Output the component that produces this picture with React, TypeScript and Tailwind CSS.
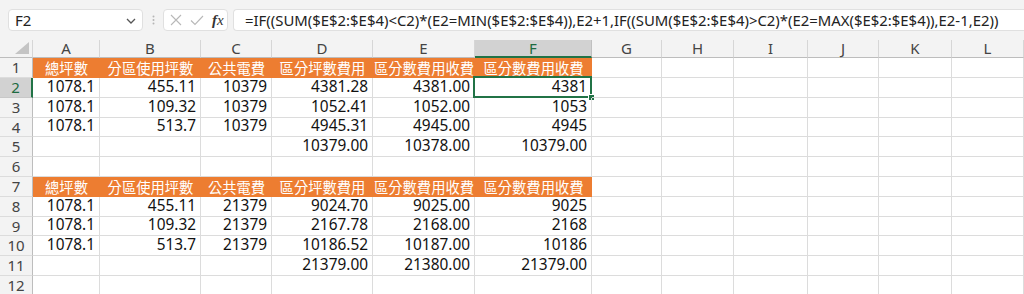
import React from "react";

const letters = ["A", "B", "C", "D", "E", "F", "G", "H", "I", "J", "K", "L"];
const rowH = [20, 20, 20, 19, 20, 20, 20, 20, 19, 20, 20, 20];

const HEAD = ["總坪數", "分區使用坪數", "公共電費", "區分坪數費用", "區分數費用收費", "區分數費用收費"];

const data: (string[] | "head" | null)[] = [
  "head",
  ["1078.1", "455.11", "10379", "4381.28", "4381.00", "4381"],
  ["1078.1", "109.32", "10379", "1052.41", "1052.00", "1053"],
  ["1078.1", "513.7", "10379", "4945.31", "4945.00", "4945"],
  ["", "", "", "10379.00", "10378.00", "10379.00"],
  null,
  "head",
  ["1078.1", "455.11", "21379", "9024.70", "9025.00", "9025"],
  ["1078.1", "109.32", "21379", "2167.78", "2168.00", "2168"],
  ["1078.1", "513.7", "21379", "10186.52", "10187.00", "10186"],
  ["", "", "", "21379.00", "21380.00", "21379.00"],
  null,
];

const uiFont = { fontFamily: '"Noto Sans", "Liberation Sans", sans-serif' };
const cellFont = { fontFamily: '"Noto Sans", "Liberation Sans", sans-serif' };
const cjkFont = { fontFamily: '"Noto Sans CJK TC", "Noto Sans", sans-serif' };

function FormulaBar() {
  return (
    <div className="h-[40px] bg-[#f3f3f3] flex items-start pt-[9px] pl-[8px] gap-0" style={uiFont}>
      <div className="w-[135px] h-[22px] bg-white border border-[#e0e0e0] rounded-[4px] flex items-center justify-between pl-[6px] pr-[6px]">
        <span className="text-[15px] text-[#222] leading-none">F2</span>
        <svg width="10" height="6" viewBox="0 0 10 6" className="mt-[2px]">
          <path d="M1 1 L5 5 L9 1" fill="none" stroke="#555" strokeWidth="1.3" />
        </svg>
      </div>
      <div className="w-[20px] h-[22px] flex items-center justify-center">
        <svg width="3" height="10" viewBox="0 0 3 10">
          <circle cx="1.5" cy="1.5" r="1" fill="#b5b5b5" />
          <circle cx="1.5" cy="5" r="1" fill="#b5b5b5" />
          <circle cx="1.5" cy="8.5" r="1" fill="#b5b5b5" />
        </svg>
      </div>
      <div className="w-[65px] h-[22px] bg-white border border-[#e0e0e0] rounded-[4px] flex items-center pl-[6px] gap-[8px]">
        <svg width="12" height="12" viewBox="0 0 12 12">
          <path d="M1 1 L11 11 M11 1 L1 11" stroke="#b8b8b8" strokeWidth="1.1" />
        </svg>
        <svg width="14" height="11" viewBox="0 0 14 11">
          <path d="M1 5.5 L5 9.5 L13 1" fill="none" stroke="#b8b8b8" strokeWidth="1.1" />
        </svg>
        <span className="text-[15px] text-[#333] italic leading-none" style={{ fontFamily: '"Liberation Serif", serif' }}>
          <span className="font-bold">f</span>x
        </span>
      </div>
      <div className="ml-[5px] flex-1 h-[22px] bg-white border border-r-0 border-[#e0e0e0] rounded-l-[4px] flex items-center pl-[11px] overflow-hidden whitespace-nowrap">
        <span className="text-[14.9px] text-[#222] leading-none">
          =IF((SUM($E$2:$E$4)&lt;C2)*(E2=MIN($E$2:$E$4)),E2+1,IF((SUM($E$2:$E$4)&gt;C2)*(E2=MAX($E$2:$E$4)),E2-1,E2))
        </span>
      </div>
    </div>
  );
}

export default function App() {
  return (
    <div className="w-[1024px] h-[294px] overflow-hidden bg-white">
      <FormulaBar />
      <div className="grid grid-cols-[33px_67px_101px_71px_101px_102px_117px_70px_72px_74px_71px_73px_72px_1fr]" style={uiFont}>
        {/* header row */}
        <div className="h-[18px] bg-[#f3f3f3] border-b border-[#bdbdbd] relative border-r border-r-[#d6d6d6]">
          <svg width="14" height="12" viewBox="0 0 14 12" className="absolute right-[3px] bottom-[3px]">
            <path d="M14 0 L14 12 L0 12 Z" fill="#c4c4c4" />
          </svg>
        </div>
        {letters.map((l, i) =>
          i === 5 ? (
            <div key={l} className="h-[18px] bg-[#d2d2d2] border-b-2 border-b-[#217346] border-r border-r-[#c0c0c0] flex items-center justify-center text-[15px] text-[#1e6b41] leading-none">
              {l}
            </div>
          ) : (
            <div key={l} className="h-[18px] bg-[#f3f3f3] border-b border-[#bdbdbd] border-r border-r-[#d6d6d6] flex items-center justify-center text-[15px] text-[#444] leading-none">
              {l}
            </div>
          )
        )}
        <div className="h-[18px] bg-[#f3f3f3] border-b border-[#bdbdbd]" />

        {data.map((row, r) => {
          const h = rowH[r];
          const sel = r === 1;
          const cells: React.ReactNode[] = [];
          cells.push(
            <div
              key={`rh${r}`}
              className={
                sel
                  ? "bg-[#d2d2d2] border-r-2 border-r-[#217346] border-b border-b-[#c8c8c8] flex items-center justify-center text-[15px] text-[#1e6b41] leading-none"
                  : "bg-[#f3f3f3] border-r border-r-[#bdbdbd] border-b border-b-[#dcdcdc] flex items-center justify-center text-[15px] text-[#444] leading-none"
              }
              style={{ height: h }}
            >
              {r + 1}
            </div>
          );
          for (let c = 0; c < 12; c++) {
            if (row === "head" && c < 6) {
              cells.push(
                <div
                  key={`c${r}-${c}`}
                  className="bg-[#ed7d31] flex items-center justify-center text-white text-[14.3px] leading-none whitespace-nowrap overflow-visible"
                  style={{ ...cjkFont, height: h }}
                >
                  {HEAD[c]}
                </div>
              );
            } else {
              const txt = Array.isArray(row) && c < 6 ? row[c] : "";
              const isF2 = r === 1 && c === 5;
              cells.push(
                <div
                  key={`c${r}-${c}`}
                  className="relative border-r border-b border-[#dcdcdc] flex items-end justify-end pr-[4px] pb-[1px] text-[15.4px] text-[#111] leading-[18px] whitespace-nowrap"
                  style={{ ...cellFont, height: h }}
                >
                  {txt}
                  {isF2 && (
                    <>
                      <div className="absolute left-[-2px] top-[-2px] right-[-1px] bottom-[-1px] border-2 border-[#217346] pointer-events-none" />
                      <div className="absolute right-[-4px] bottom-[-4px] w-[7px] h-[7px] bg-[#217346] border border-white" />
                    </>
                  )}
                </div>
              );
            }
          }
          cells.push(
            <div key={`end${r}`} className="border-b border-[#dcdcdc]" style={{ height: h }} />
          );
          return <React.Fragment key={r}>{cells}</React.Fragment>;
        })}
      </div>
    </div>
  );
}
